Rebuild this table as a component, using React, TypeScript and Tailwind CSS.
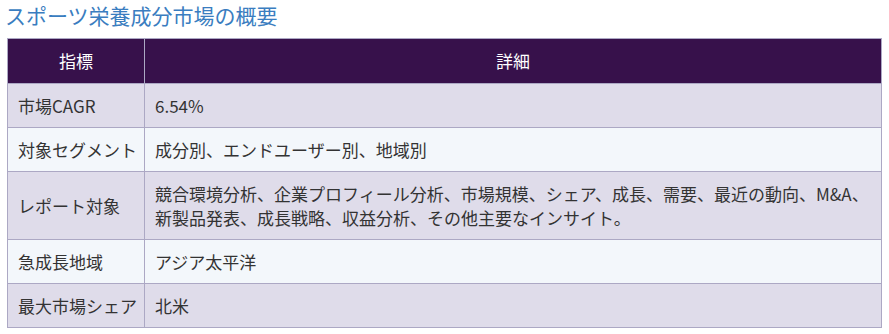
const rows: { label: string; value: React.ReactNode }[] = [
  { label: "市場CAGR", value: "6.54%" },
  { label: "対象セグメント", value: "成分別、エンドユーザー別、地域別" },
  {
    label: "レポート対象",
    value: (
      <>
        競合環境分析、企業プロフィール分析、市場規模、シェア、成長、需要、最近の動向、M&amp;A、
        <br />
        新製品発表、成長戦略、収益分析、その他主要なインサイト。
      </>
    ),
  },
  { label: "急成長地域", value: "アジア太平洋" },
  { label: "最大市場シェア", value: "北米" },
];

export default function App() {
  return (
    <div
      className="w-[889px] h-[334px] bg-white px-[7px]"
      style={{ fontFamily: '"Noto Sans CJK JP", "Noto Sans", sans-serif' }}
    >
      <h2 className="text-[21px] leading-[30px] text-[#3a7dc0] h-[38px] -ml-[2px]">
        スポーツ栄養成分市場の概要
      </h2>

      <table className="w-[875px] table-fixed border-collapse text-[17px] text-[#333333]">
        <thead>
          <tr className="bg-[#37114b] text-white h-[45px]">
            <th className="w-[137px] border border-[#aca8c4] font-normal text-center">指標</th>
            <th className="border border-[#aca8c4] font-normal text-center">詳細</th>
          </tr>
        </thead>
        <tbody>
          {rows.map((r, i) => (
            <tr key={r.label} className={i % 2 === 0 ? "bg-[#dfdcea]" : "bg-[#f3f7fb]"}>
              <td className="border border-[#aca8c4] pl-[10px] pr-0 pt-[10px] pb-[9px] leading-[24px] whitespace-nowrap overflow-visible">
                {r.label}
              </td>
              <td className="border border-[#aca8c4] px-[10px] pt-[10px] pb-[9px] leading-[24px] whitespace-nowrap">
                {r.value}
              </td>
            </tr>
          ))}
        </tbody>
      </table>
    </div>
  );
}
